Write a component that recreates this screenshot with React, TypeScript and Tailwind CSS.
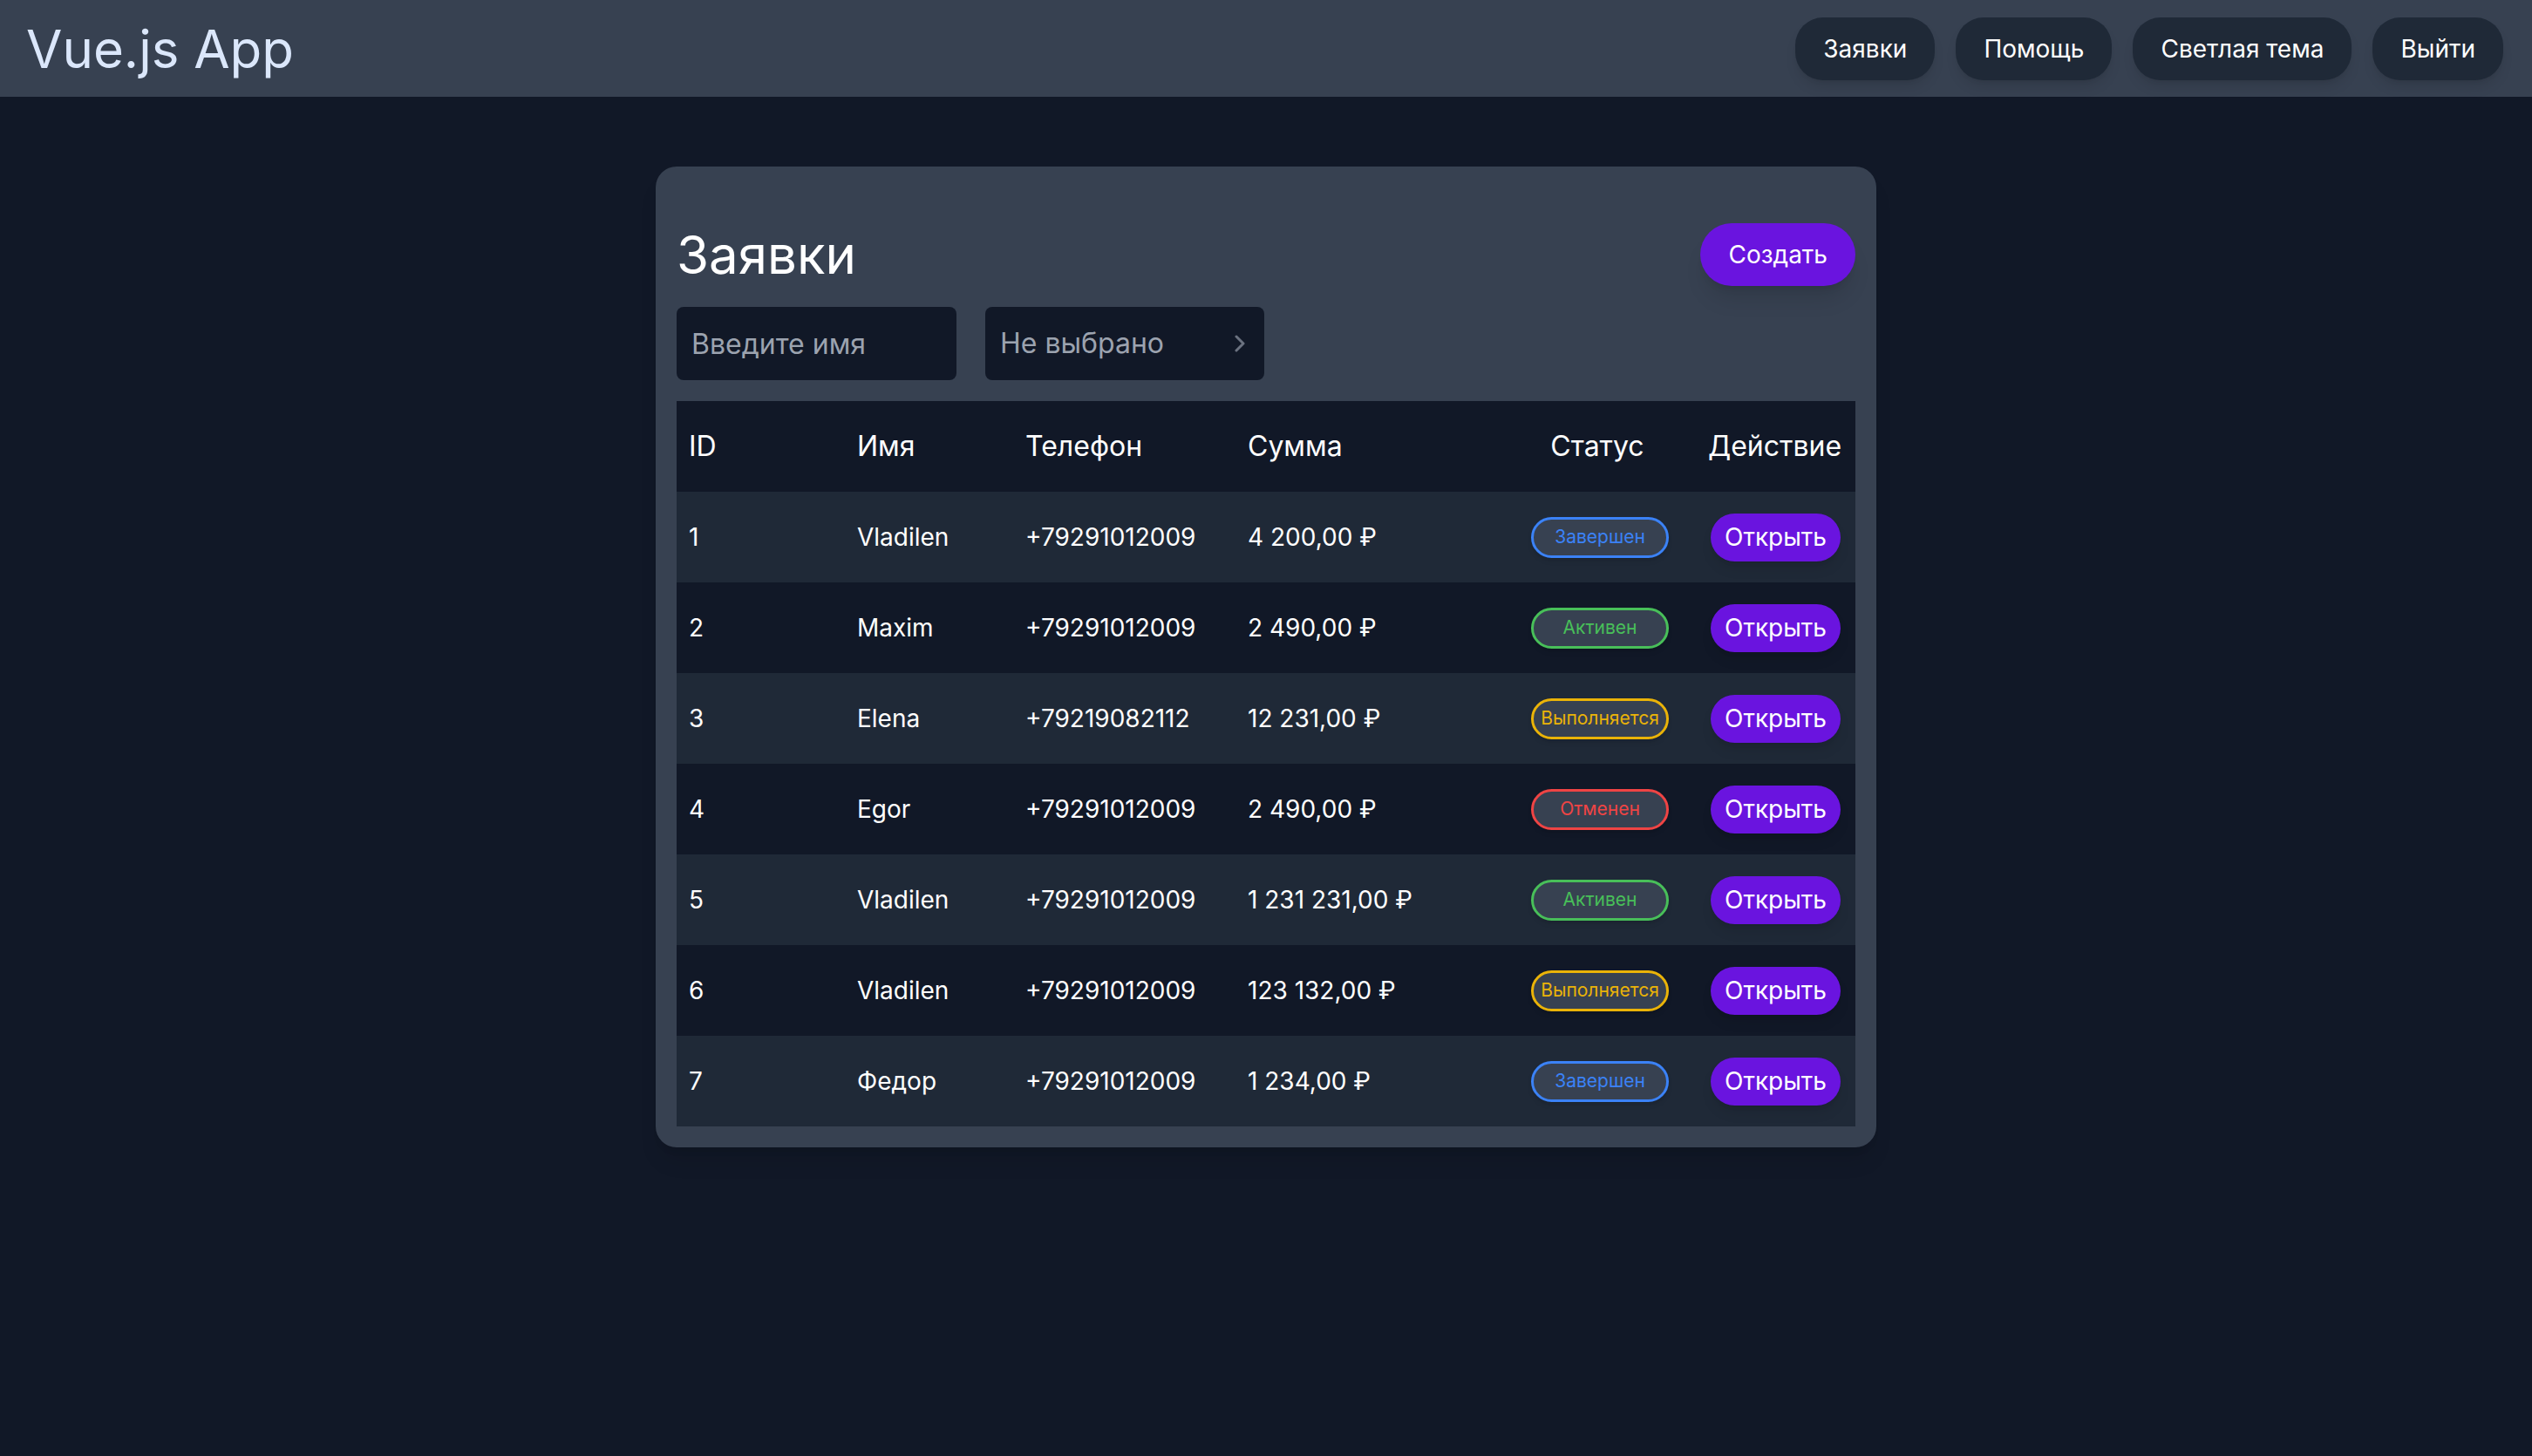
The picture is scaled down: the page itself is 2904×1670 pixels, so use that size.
import React from "react";

type Status = "done" | "active" | "progress" | "cancel";

const rows: { id: number; name: string; phone: string; sum: string; status: Status }[] = [
  { id: 1, name: "Vladilen", phone: "+79291012009", sum: "4 200,00 ₽", status: "done" },
  { id: 2, name: "Maxim", phone: "+79291012009", sum: "2 490,00 ₽", status: "active" },
  { id: 3, name: "Elena", phone: "+79219082112", sum: "12 231,00 ₽", status: "progress" },
  { id: 4, name: "Egor", phone: "+79291012009", sum: "2 490,00 ₽", status: "cancel" },
  { id: 5, name: "Vladilen", phone: "+79291012009", sum: "1 231 231,00 ₽", status: "active" },
  { id: 6, name: "Vladilen", phone: "+79291012009", sum: "123 132,00 ₽", status: "progress" },
  { id: 7, name: "Федор", phone: "+79291012009", sum: "1 234,00 ₽", status: "done" },
];

function Badge({ status }: { status: Status }) {
  if (status === "done")
    return (
      <span className="flex h-[47px] w-[158px] items-center justify-center rounded-full border-[3px] border-[#3b82f6] bg-[#374151] text-[21px] text-[#3b82f6] shadow-md">
        Завершен
      </span>
    );
  if (status === "active")
    return (
      <span className="flex h-[47px] w-[158px] items-center justify-center rounded-full border-[3px] border-[#48bf59] bg-[#374151] text-[21px] text-[#48bf59] shadow-md">
        Активен
      </span>
    );
  if (status === "progress")
    return (
      <span className="flex h-[47px] w-[158px] items-center justify-center rounded-full border-[3px] border-[#eab308] bg-[#374151] text-[21px] text-[#eab308] shadow-md">
        Выполняется
      </span>
    );
  return (
    <span className="flex h-[47px] w-[158px] items-center justify-center rounded-full border-[3px] border-[#ef4444] bg-[#374151] text-[21px] text-[#ef4444] shadow-md">
      Отменен
    </span>
  );
}

export default function App() {
  return (
    <div
      className="min-h-[1670px] w-full bg-[#111827] text-[#f9fafb]"
      style={{ fontFamily: "Inter, 'Noto Sans', sans-serif" }}
    >
      <header className="flex h-[111px] items-center justify-between bg-[#374151] pl-[30px] pr-[33px]">
        <div className="text-[60px] leading-none text-[#dbe7fb]">Vue.js App</div>
        <nav className="flex items-center gap-[24px]">
          {["Заявки", "Помощь", "Светлая тема", "Выйти"].map((t) => (
            <button
              key={t}
              className="flex h-[72px] items-center rounded-[32px] bg-[#1f2937] px-[32px] text-[28px] text-white shadow-lg"
            >
              {t}
            </button>
          ))}
        </nav>
      </header>

      <main className="flex justify-center pt-[80px]">
        <div className="w-[1400px] rounded-[24px] bg-[#374151] px-[24px] pb-[24px] pt-[65px] shadow-xl">
          <div className="flex h-[72px] items-center justify-between">
            <h1 className="text-[60px] leading-none text-white">Заявки</h1>
            <button className="flex h-[72px] items-center rounded-[36px] bg-[#6a14df] px-[32px] text-[28px] text-white shadow-xl">
              Создать
            </button>
          </div>

          <div className="mt-[24px] flex gap-[33px]">
            <input
              placeholder="Введите имя"
              className="h-[84px] w-[321px] rounded-[8px] bg-[#111827] px-[17px] text-[32px] text-white outline-none placeholder:text-[#9ca3af]"
            />
            <div className="flex h-[84px] w-[320px] items-center justify-between rounded-[8px] bg-[#111827] pl-[17px] pr-[22px] text-[32px] text-[#9ca3af]">
              <span>Не выбрано</span>
              <svg width="12" height="20" viewBox="0 0 12 20" fill="none">
                <path d="M2 2l8 8-8 8" stroke="#6b7280" strokeWidth="3" strokeLinecap="round" strokeLinejoin="round" />
              </svg>
            </div>
          </div>

          <div className="mt-[24px]">
            <div className="grid h-[104px] grid-cols-[193px_193px_255px_308px_220px_183px] items-center bg-[#111827] text-[32px] text-white">
              <div className="pl-[14px]">ID</div>
              <div className="pl-[14px]">Имя</div>
              <div className="pl-[14px]">Телефон</div>
              <div className="pl-[14px]">Сумма</div>
              <div className="pr-[6px] text-center">Статус</div>
              <div className="pr-[2px] text-center">Действие</div>
            </div>
            {rows.map((r, i) => (
              <div
                key={r.id}
                className={
                  "grid h-[104px] grid-cols-[193px_193px_255px_308px_220px_183px] items-center text-[28px] text-white " +
                  (i % 2 === 0 ? "bg-[#1f2937]" : "bg-[#111827]")
                }
              >
                <div className="pl-[14px]">{r.id}</div>
                <div className="pl-[14px]">{r.name}</div>
                <div className="pl-[14px]">{r.phone}</div>
                <div className="pl-[14px]">{r.sum}</div>
                <div className="flex justify-center">
                  <Badge status={r.status} />
                </div>
                <div className="flex justify-center">
                  <button className="flex h-[55px] w-[149px] items-center justify-center rounded-[28px] bg-[#6a14df] text-[28px] text-white shadow-lg">
                    Открыть
                  </button>
                </div>
              </div>
            ))}
          </div>
        </div>
      </main>
    </div>
  );
}
